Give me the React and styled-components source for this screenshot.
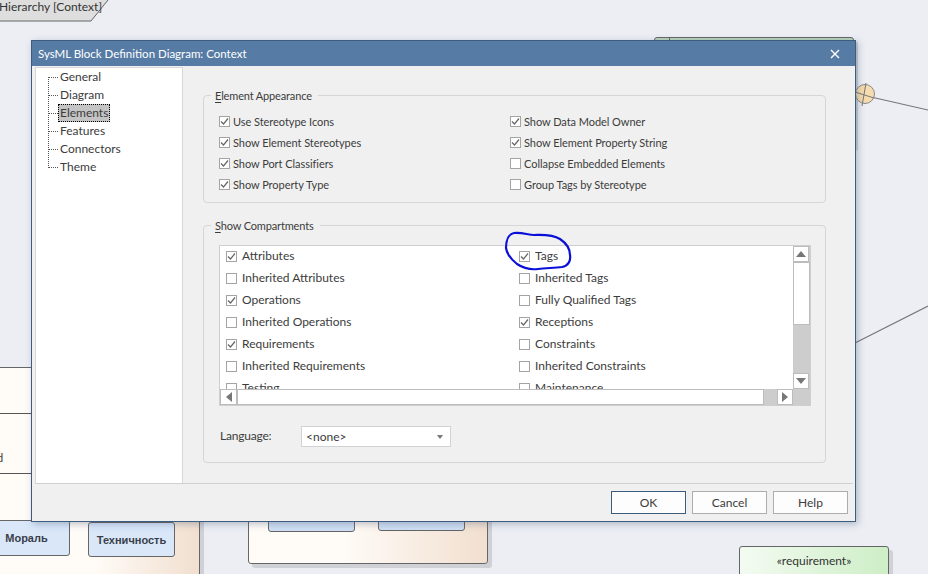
import styled, { createGlobalStyle } from 'styled-components'

const Global = createGlobalStyle`
  html, body {
    margin: 0;
    padding: 0;
    background: #eceef4;
  }
  * {
    box-sizing: border-box;
  }
`

const Canvas = styled.div`
  position: relative;
  width: 928px;
  height: 574px;
  overflow: hidden;
  background: #eceef4;
  font-family: 'Lato', 'Liberation Sans', sans-serif;
  font-size: 12px;
  color: #3c3c3c;
`

const Wires = styled.svg`
  position: absolute;
  left: 0;
  top: 0;
`

const FrameLabel = styled.div`
  position: absolute;
  left: -1px;
  top: 0;
  line-height: 14px;
  color: #333;
  white-space: nowrap;
`

const DiagramBox = styled.div`
  position: absolute;
  left: ${(p) => p.$x}px;
  top: ${(p) => p.$y}px;
  width: ${(p) => p.$w}px;
  height: ${(p) => p.$h}px;
  background: ${(p) => p.$bg};
  border: 1px solid #666;
  border-radius: 3px;
  box-shadow: 4px 4px 0 rgba(0, 0, 0, 0.12);
`

const Block = styled(DiagramBox)`
  display: flex;
  align-items: center;
  justify-content: center;
  font-weight: 700;
  font-family: 'Liberation Sans', sans-serif;
  font-size: 11px;
  color: #3a3f4a;
  box-shadow: none;
`

const Requirement = styled(DiagramBox)`
  padding-top: 6px;
  text-align: center;
  color: #333;
  line-height: 16px;
`

const RowLine = styled.div`
  position: absolute;
  left: 0;
  top: ${(p) => p.$y}px;
  width: 32px;
  height: 1px;
  background: #555;
`

const CutText = styled.span`
  position: absolute;
  left: -3px;
  top: 451px;
  line-height: 14px;
  font-size: 11px;
  color: #333;
`

const Dialog = styled.div`
  position: absolute;
  left: 31px;
  top: 40px;
  width: 825px;
  height: 482px;
  display: flex;
  flex-direction: column;
  background: #f0f0f0;
  border: 1px solid #3e5c7e;
  box-shadow: 2px 2px 7px rgba(60, 80, 110, 0.35);
`

const TitleBar = styled.div`
  height: 25px;
  flex: none;
  display: flex;
  align-items: center;
  justify-content: space-between;
  padding: 0 15px 0 6px;
  background: #567ba5;
  color: #fff;
  font-size: 11.5px;
`

const CloseIcon = styled.svg`
  display: block;
`

const Body = styled.div`
  flex: 1;
  display: flex;
  margin: 1px 2px 0 3px;
  min-height: 0;
  border-bottom: 1px solid #d0d0d0;
`

const Tree = styled.div`
  width: 148px;
  flex: none;
  position: relative;
  padding: 0 0 0 24px;
  background: #fff;
  border: 1px solid #d8d8d8;
  border-bottom: none;
`

const TreeStem = styled.div`
  position: absolute;
  left: 12px;
  top: 9px;
  height: 91px;
  border-left: 1px dotted #555;
`

const TreeRow = styled.div`
  position: relative;
  height: 18px;
  line-height: 18px;

  &::before {
    content: '';
    position: absolute;
    left: -11px;
    top: 9px;
    width: 9px;
    border-top: 1px dotted #555;
  }
`

const TreeLabel = styled.span`
  display: inline-block;
  height: 18px;
  line-height: 16px;
  padding: 0 1px;
  margin-left: -2px;
  border: 1px dotted ${(p) => (p.$selected ? '#000' : 'transparent')};
  background: ${(p) => (p.$selected ? '#c4c4c4' : 'transparent')};
`

const Content = styled.div`
  flex: 1;
  display: flex;
  flex-direction: column;
  gap: 14px;
  padding: 20px 27px 0 20px;
`

const Group = styled.fieldset`
  margin: 0;
  padding: 0 0 0 15px;
  min-width: 0;
  border: 1px solid #d6d6d6;
  border-radius: 4px;
  height: ${(p) => p.$h}px;
`

const Legend = styled.legend`
  margin-left: -8px;
  padding: 0 6px 0 4px;
  line-height: 17px;
  height: 17px;
  font-size: 11px;
  letter-spacing: -0.15px;
`

const Under = styled.span`
  text-decoration: underline;
  text-underline-offset: 2px;
`

const AppearanceGrid = styled.div`
  display: grid;
  grid-template-columns: 291px 1fr;
  grid-auto-rows: 21px;
  margin-top: 7px;
  font-size: 11px;
  letter-spacing: -0.05px;
`

const CheckRow = styled.div`
  display: flex;
  align-items: center;
  gap: ${(p) => p.$gap}px;
  padding-bottom: ${(p) => p.$lift || 0}px;
  white-space: nowrap;
`

const ListLabel = styled.span`
  padding-bottom: 2px;
`

const Box = styled.span`
  width: 11px;
  height: 11px;
  flex: none;
  display: block;
  background: #fff;
  border: 1px solid #a4a4a4;
`

const Tick = styled.svg`
  display: block;
`

const ListBox = styled.div`
  display: grid;
  grid-template-columns: 1fr 17px;
  grid-template-rows: 143px 16px;
  width: 592px;
  height: 161px;
  margin-top: 11px;
  background: #fff;
  border: 1px solid #cfcfcf;
`

const ListRows = styled.div`
  overflow: hidden;
  display: grid;
  grid-template-columns: 293px 1fr;
  grid-auto-rows: 22px;
  padding-left: 6px;
`

const VScroll = styled.div`
  display: flex;
  flex-direction: column;
  background: #cdcdcd;
`

const HScroll = styled.div`
  display: flex;
  background: #cdcdcd;
`

const ArrowBtn = styled.div`
  width: ${(p) => p.$w || 16}px;
  height: 16px;
  flex: none;
  display: flex;
  align-items: center;
  justify-content: center;
  background: #fff;
  border: 1px solid #bcbcbc;
`

const Thumb = styled.div`
  flex: 0 0 ${(p) => p.$size}px;
  background: #fff;
  border: 1px solid #bcbcbc;
`

const Track = styled.div`
  flex: 1;
`

const Corner = styled.div`
  background: #cdcdcd;
`

const LanguageRow = styled.div`
  display: flex;
  align-items: center;
  margin-top: 20px;
  margin-left: 1px;
`

const LanguageLabel = styled.span`
  width: 81px;
  padding-bottom: 2px;
  letter-spacing: -0.2px;
`

const Select = styled.div`
  width: 150px;
  height: 21px;
  display: flex;
  align-items: center;
  justify-content: space-between;
  padding: 0 7px 0 4px;
  background: #fff;
  border: 1px solid #d2d2d2;
`

const Footer = styled.div`
  height: 37px;
  flex: none;
  display: flex;
  justify-content: flex-end;
  gap: 6px;
  padding: 7px 7px 0 0;
`

const Button = styled.div`
  width: 75px;
  height: 23px;
  display: flex;
  align-items: center;
  justify-content: center;
  background: #fdfdfd;
  border: 1px solid ${(p) => (p.$primary ? '#3e5c7e' : '#adadad')};
`

const Scribble = styled.svg`
  position: absolute;
  left: 500px;
  top: 228px;
`

const Check = ({ checked }) => (
  <Box>
    {checked && (
      <Tick width='9' height='9' viewBox='0 0 9 9'>
        <path d='M1 4.5 L3.5 7 L8 1.5' fill='none' stroke='#666' strokeWidth='1.2' />
      </Tick>
    )}
  </Box>
)

const appearance = [
  ['Use Stereotype Icons', true],
  ['Show Data Model Owner', true],
  ['Show Element Stereotypes', true],
  ['Show Element Property String', true],
  ['Show Port Classifiers', true],
  ['Collapse Embedded Elements', false],
  ['Show Property Type', true],
  ['Group Tags by Stereotype', false],
]

const compartments = [
  ['Attributes', true],
  ['Tags', true],
  ['Inherited Attributes', false],
  ['Inherited Tags', false],
  ['Operations', true],
  ['Fully Qualified Tags', false],
  ['Inherited Operations', false],
  ['Receptions', true],
  ['Requirements', true],
  ['Constraints', false],
  ['Inherited Requirements', false],
  ['Inherited Constraints', false],
  ['Testing', false],
  ['Maintenance', false],
]

const pages = ['General', 'Diagram', 'Elements', 'Features', 'Connectors', 'Theme']

const App = () => (
  <Canvas>
    <Global />

    <DiagramBox $x={654} $y={37} $w={200} $h={110} $bg='linear-gradient(90deg, #b9d5bb 14px, #666 14px, #666 15px, #b9d5bb 15px)' />
    <DiagramBox $x={-10} $y={367} $w={210} $h={230} $bg='linear-gradient(90deg, #fffbf7 50%, #f1dfcf)' />
    <RowLine $y={413} />
    <RowLine $y={473} />
    <CutText>d</CutText>
    <DiagramBox $x={248} $y={500} $w={240} $h={64} $bg='linear-gradient(90deg, #fffbf7 40%, #f1dfcf)' />
    <Block $x={-17} $y={520} $w={87} $h={36} $bg='#d9e7f9'>Мораль</Block>
    <Block $x={88} $y={522} $w={87} $h={35} $bg='#d9e7f9'>Техничность</Block>
    <Block $x={268} $y={500} $w={87} $h={32} $bg='#cfe0f5' />
    <Block $x={378} $y={500} $w={87} $h={31} $bg='#cfe0f5' />
    <Requirement $x={739} $y={546} $w={150} $h={50} $bg='linear-gradient(90deg, #f4fbf2, #cdeec6)'>
      «requirement»
    </Requirement>

    <Wires width='928' height='574'>
      <path d='M-2 -2 L108 -2 L108 0 L91 21 L-2 21 Z' fill='#dedede' stroke='#666' />
      <line x1='871' y1='97' x2='928' y2='110' stroke='#777' strokeWidth='1.2' />
      <line x1='855' y1='343' x2='928' y2='306' stroke='#777' strokeWidth='1.2' />
      <circle cx='865' cy='94' r='9.5' fill='#f6dcae' stroke='#888' />
      <line x1='866' y1='83' x2='862' y2='106' stroke='#777' />
      <line x1='855' y1='92' x2='874' y2='98' stroke='#777' />
    </Wires>
    <FrameLabel>Hierarchy [Context]</FrameLabel>

    <Dialog>
      <TitleBar>
        SysML Block Definition Diagram: Context
        <CloseIcon width='10' height='10' viewBox='0 0 10 10'>
          <path d='M1 1 L9 9 M9 1 L1 9' stroke='#fff' strokeWidth='1.4' />
        </CloseIcon>
      </TitleBar>
      <Body>
        <Tree>
          <TreeStem />
          {pages.map((page) => (
            <TreeRow key={page}>
              <TreeLabel $selected={page === 'Elements'}>{page}</TreeLabel>
            </TreeRow>
          ))}
        </Tree>
        <Content>
          <Group $h={116}>
            <Legend>
              <Under>E</Under>lement Appearance
            </Legend>
            <AppearanceGrid>
              {appearance.map(([label, checked]) => (
                <CheckRow key={label} $gap={3}>
                  <Check checked={checked} />
                  {label}
                </CheckRow>
              ))}
            </AppearanceGrid>
          </Group>
          <Group $h={246}>
            <Legend>
              <Under>S</Under>how Compartments
            </Legend>
            <ListBox>
              <ListRows>
                {compartments.map(([label, checked]) => (
                  <CheckRow key={label} $gap={5} $lift={2}>
                    <Check checked={checked} />
                    <ListLabel>{label}</ListLabel>
                  </CheckRow>
                ))}
              </ListRows>
              <VScroll>
                <ArrowBtn>
                  <svg width='10' height='6'><path d='M5 0 L10 6 L0 6 Z' fill='#777' /></svg>
                </ArrowBtn>
                <Thumb $size={63} />
                <Track />
                <ArrowBtn>
                  <svg width='10' height='6'><path d='M0 0 L10 0 L5 6 Z' fill='#777' /></svg>
                </ArrowBtn>
              </VScroll>
              <HScroll>
                <ArrowBtn $w={17}>
                  <svg width='6' height='10'><path d='M6 0 L6 10 L0 5 Z' fill='#777' /></svg>
                </ArrowBtn>
                <Thumb $size={527} />
                <Track />
                <ArrowBtn>
                  <svg width='6' height='10'><path d='M0 0 L6 5 L0 10 Z' fill='#777' /></svg>
                </ArrowBtn>
              </HScroll>
              <Corner />
            </ListBox>
            <LanguageRow>
              <LanguageLabel>Language:</LanguageLabel>
              <Select>
                {'<none>'}
                <svg width='6' height='4'><path d='M0 0 L6 0 L3 4 Z' fill='#777' /></svg>
              </Select>
            </LanguageRow>
          </Group>
        </Content>
      </Body>
      <Footer>
        <Button $primary>OK</Button>
        <Button>Cancel</Button>
        <Button>Help</Button>
      </Footer>
    </Dialog>

    <Scribble width='80' height='50' viewBox='0 0 80 50'>
      <path
        d='M6 20 C6 12 9 6 14 5 C22 4 28 7 34 7 C42 7 52 6 60 11 C66 15 70 20 70 27 C71 33 68 38 62 39 C54 40 46 40 38 41 C30 42 23 40 17 36 C12 32 7 27 6 20 Z'
        fill='none'
        stroke='#0a10d8'
        strokeWidth='2.2'
      />
    </Scribble>
  </Canvas>
)

export default App
